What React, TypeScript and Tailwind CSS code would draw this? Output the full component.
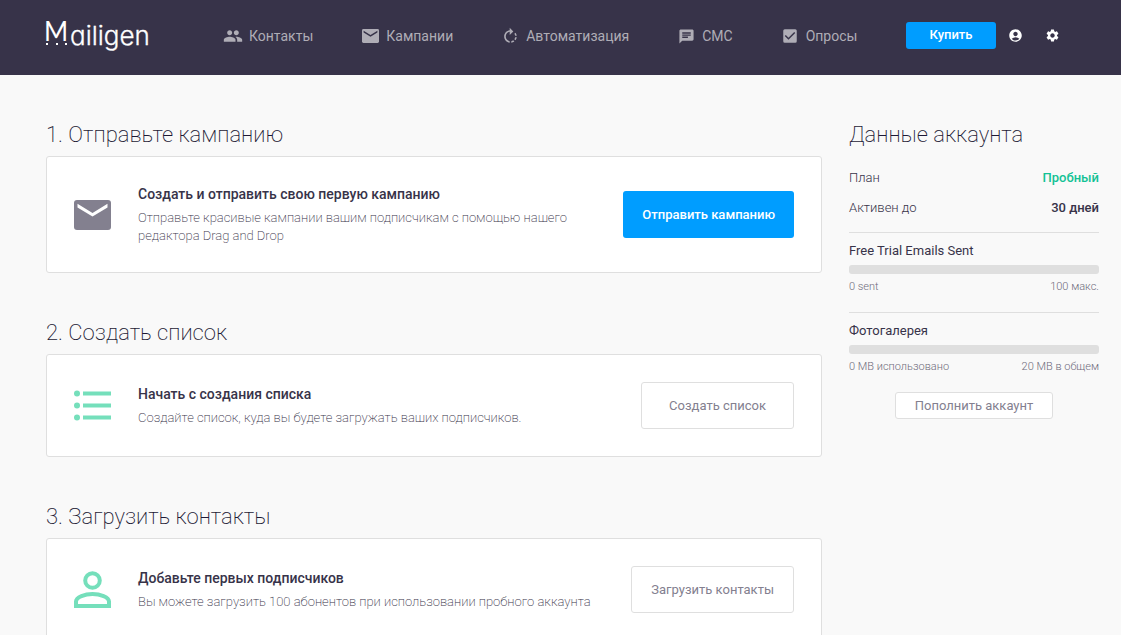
import React from "react";
import { MdPeople, MdRotateRight, MdChat, MdCheckBox, MdAccountCircle, MdSettings } from "react-icons/md";

const links = [
  { label: "Контакты", icon: <MdPeople className="size-5" /> },
  { label: "Кампании", icon: <MailIcon className="h-[14px] w-[17px] text-[#afadb6]" flap="#373349" /> },
  { label: "Автоматизация", icon: <MdRotateRight className="size-[19px]" /> },
  { label: "СМС", icon: <MdChat className="size-[17px]" /> },
  { label: "Опросы", icon: <MdCheckBox className="size-[18px]" /> },
];

function Logo() {
  return (
    <svg viewBox="0 0 108 50" className="h-[50px] w-[108px]" role="img" aria-label="Mailigen">
      <text x="1" y="31" fill="#fff" className="font-['Lato',sans-serif] text-[26px]">M</text>
      <text x="27" y="35" fill="#fff" stroke="#fff" strokeWidth="0.3" className="font-['Inter',sans-serif] text-[26px] font-light [font-feature-settings:'cv11']">ailigen</text>
      <g fill="#fff">
        <rect x="3" y="33" width="2" height="2" />
        <rect x="13" y="33" width="2" height="2" />
        <rect x="22" y="33" width="2" height="2" />
      </g>
    </svg>
  );
}

function MailIcon({ className, flap }: { className: string; flap: string }) {
  return (
    <svg viewBox="0 0 37 30" className={className} aria-hidden="true">
      <rect width="37" height="30" rx="3" fill="currentColor" />
      <path d="M3.500 3.800v3.600L18.500 16.500l15-9.100V3.800l-15 9.200z" fill={flap} />
    </svg>
  );
}

function ListIcon() {
  return (
    <svg viewBox="0 0 37 31" className="h-[31px] w-[37px]" fill="#75dfbb" aria-hidden="true">
      <circle cx="3" cy="3.500" r="3" />
      <circle cx="3" cy="15.500" r="3" />
      <circle cx="3" cy="27.500" r="3" />
      <path d="M9 1.500h28v4H9zM9 13.500h28v4H9zM9 25.500h28v4H9z" />
    </svg>
  );
}

function PersonIcon() {
  return (
    <svg viewBox="0 0 37 37" className="size-[37px]" fill="none" stroke="#75dfbb" strokeWidth="4" aria-hidden="true">
      <circle cx="18.500" cy="9.500" r="7.300" />
      <path d="M2 35v-4.500c0-4.500 9-7.500 16.500-7.500S35 26 35 30.500V35z" />
    </svg>
  );
}

type StepProps = {
  title: string;
  heading: string;
  text: string;
  action: string;
  icon: React.ReactNode;
  primary?: boolean;
  wide?: boolean;
};

function Step({ title, heading, text, action, icon, primary, wide }: StepProps) {
  const look = primary
    ? "bg-[#009dff] font-medium text-white px-[19px]"
    : "border border-[#dfdfdf] bg-white text-[#83808f] " + (wide ? "px-[27px]" : "px-[19px]");
  return (
    <section>
      <h2 className="text-[22px] leading-8 font-extralight text-[#1d1935]">{title}</h2>
      <div className="mt-[5px] flex items-center rounded-[3px] border border-[#dfdfdf] bg-white px-[27px] py-[27px]">
        <div className="flex w-16 shrink-0 items-center">{icon}</div>
        <div className="min-w-0 flex-1">
          <h3 className="text-sm leading-5 font-medium">{heading}</h3>
          <p className="mt-[5px] max-w-[460px] text-[13px] leading-[18px] font-extralight text-[#373349]">{text}</p>
        </div>
        <button type="button" className={"h-[47px] shrink-0 rounded-[3px] text-[13px] " + look}>{action}</button>
      </div>
    </section>
  );
}

function Usage({ label, used, total }: { label: string; used: string; total: string }) {
  return (
    <div className="border-t border-[#dfdfdf] pt-2">
      <h3 className="text-[13px] leading-5">{label}</h3>
      <div className="mt-1 h-[9px] rounded-[3px] bg-[#dfdfdf]" />
      <div className="mt-[5px] flex justify-between text-[11px] leading-4 font-light text-[#6f6c7c]">
        <span>{used}</span>
        <span>{total}</span>
      </div>
    </div>
  );
}

export default function App() {
  return (
    <div className="min-h-screen bg-[#f9f9f9] font-['Roboto',sans-serif] text-[#373349]">
      <header className="flex h-[75px] items-start bg-[#373349] pt-[10px] pr-[61px] pl-[43px]">
        <a href="#" className="shrink-0"><Logo /></a>
        <nav className="mt-2 ml-[72px] flex h-9 items-center gap-[47px]">
          {links.map((l) => (
            <a key={l.label} href="#" className="flex items-center gap-1.5 text-sm text-[#afadb6]">
              <span className="flex w-5 justify-center">{l.icon}</span>
              {l.label}
            </a>
          ))}
        </nav>
        <div className="mt-2 ml-auto flex h-[34px] items-center">
          <button type="button" className="h-[27px] w-[90px] rounded-[3px] bg-[#009dff] text-[13px] font-medium text-white">Купить</button>
          <button type="button" aria-label="Аккаунт" className="ml-3 text-white"><MdAccountCircle className="size-[15px]" /></button>
          <button type="button" aria-label="Настройки" className="ml-[22px] text-white"><MdSettings className="size-[15px]" /></button>
        </div>
      </header>
      <div className="flex gap-[27px] pt-11 pr-[22px] pl-[46px]">
        <main className="flex min-w-0 flex-1 flex-col gap-11">
          <Step title="1. Отправьте кампанию" heading="Создать и отправить свою первую кампанию" text="Отправьте красивые кампании вашим подписчикам с помощью нашего редактора Drag and Drop" action="Отправить кампанию" icon={<MailIcon className="h-[30px] w-[37px] text-[#83808f]" flap="#fff" />} primary />
          <Step title="2. Создать список" heading="Начать с создания списка" text="Создайте список, куда вы будете загружать ваших подписчиков." action="Создать список" icon={<ListIcon />} wide />
          <Step title="3. Загрузить контакты" heading="Добавьте первых подписчиков" text="Вы можете загрузить 100 абонентов при использовании пробного аккаунта" action="Загрузить контакты" icon={<PersonIcon />} />
        </main>
        <aside className="w-[250px] shrink-0">
          <h2 className="text-[22px] leading-8 font-extralight text-[#1d1935]">Данные аккаунта</h2>
          <dl className="mt-[17px] mb-[14px] flex flex-col gap-2.5 text-[13px] leading-5">
            <div className="flex justify-between"><dt className="font-light">План</dt><dd className="font-medium text-[#13c295]">Пробный</dd></div>
            <div className="flex justify-between"><dt className="font-light">Активен до</dt><dd className="font-medium">30 дней</dd></div>
          </dl>
          <div className="flex flex-col gap-[17px]">
            <Usage label="Free Trial Emails Sent" used="0 sent" total="100 макс." />
            <Usage label="Фотогалерея" used="0 MB использовано" total="20 MB в общем" />
          </div>
          <div className="mt-[17px] flex justify-center">
            <button type="button" className="h-[27px] rounded-[3px] border border-[#dfdfdf] bg-white px-[19px] text-[13px] text-[#83808f]">Пополнить аккаунт</button>
          </div>
        </aside>
      </div>
    </div>
  );
}
